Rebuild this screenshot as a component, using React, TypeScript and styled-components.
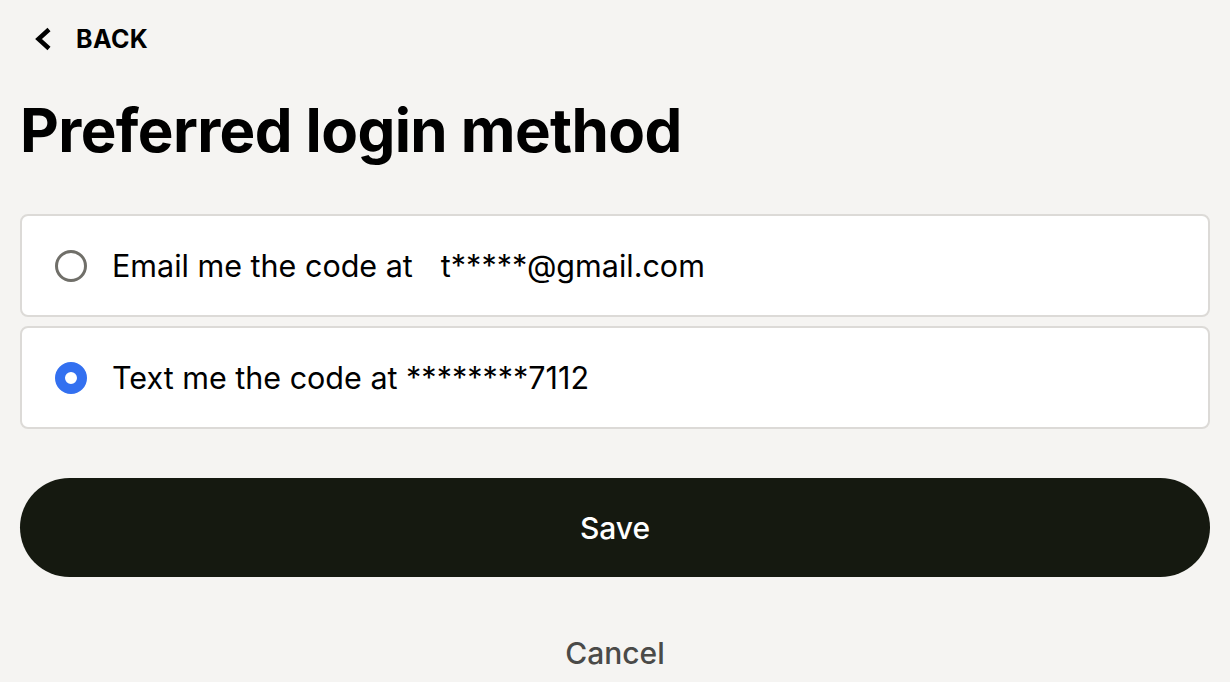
import styled, { createGlobalStyle } from 'styled-components';

const GlobalStyle = createGlobalStyle`
    html, body {
        margin: 0;
        padding: 0;
        background-color: #f5f4f2;
        font-family: Inter, "Noto Sans", sans-serif;
        color: #000;
    }
`;

const Page = styled.div`
    padding: 22px 20px 0 20px;
    display: flex;
    flex-direction: column;
`;

const BackLink = styled.a`
    display: flex;
    align-items: center;
    gap: 24px;
    padding-left: 14px;
    height: 34px;
    font-size: 25px;
    font-weight: 700;
    letter-spacing: 0.4px;
    color: #000;
    text-decoration: none;
`;

const Title = styled.h1`
    margin: 44px 0 54px 0;
    font-size: 60px;
    line-height: 1;
    font-weight: 700;
    letter-spacing: -0.6px;
`;

const Options = styled.div`
    display: flex;
    flex-direction: column;
    gap: 9px;
`;

const Option = styled.label`
    display: flex;
    align-items: center;
    gap: 25px;
    height: 103px;
    box-sizing: border-box;
    padding: 0 0 0 33px;
    background-color: #fff;
    border: 2px solid #dcdad7;
    border-radius: 8px;
    font-size: 30.5px;
    cursor: pointer;
`;

const Radio = styled.span<{ $checked: boolean }>`
    width: 32px;
    height: 32px;
    box-sizing: border-box;
    border-radius: 50%;
    flex-shrink: 0;
    border: ${p => (p.$checked ? '10px solid #3370f0' : '3px solid #706f69')};
    background-color: #fff;
`;

const Masked = styled.span`
    margin-left: 28px;
`;

const SaveButton = styled.button`
    margin-top: 49px;
    height: 99px;
    border: none;
    border-radius: 50px;
    background-color: #151910;
    color: #fff;
    font-family: inherit;
    font-size: 30px;
    font-weight: 500;
`;

const CancelButton = styled.button`
    margin-top: 57px;
    align-self: center;
    background: none;
    border: none;
    color: #4a4a48;
    font-family: inherit;
    font-size: 30px;
    font-weight: 500;
`;

export default function App() {
    return (
        <>
            <GlobalStyle />
            <Page>
                <BackLink href="#">
                    <svg width="18" height="26" viewBox="0 0 18 26" fill="none">
                        <path d="M15 3.5 L4.5 13 L15 22.5" stroke="#000" strokeWidth="4.5" strokeLinecap="butt" strokeLinejoin="miter" />
                    </svg>
                    BACK
                </BackLink>
                <Title>Preferred login method</Title>
                <Options>
                    <Option>
                        <Radio $checked={false} />
                        <span>Email me the code at<Masked>t*****@gmail.com</Masked></span>
                    </Option>
                    <Option>
                        <Radio $checked={true} />
                        <span>Text me the code at ********7112</span>
                    </Option>
                </Options>
                <SaveButton>Save</SaveButton>
                <CancelButton>Cancel</CancelButton>
            </Page>
        </>
    );
}
